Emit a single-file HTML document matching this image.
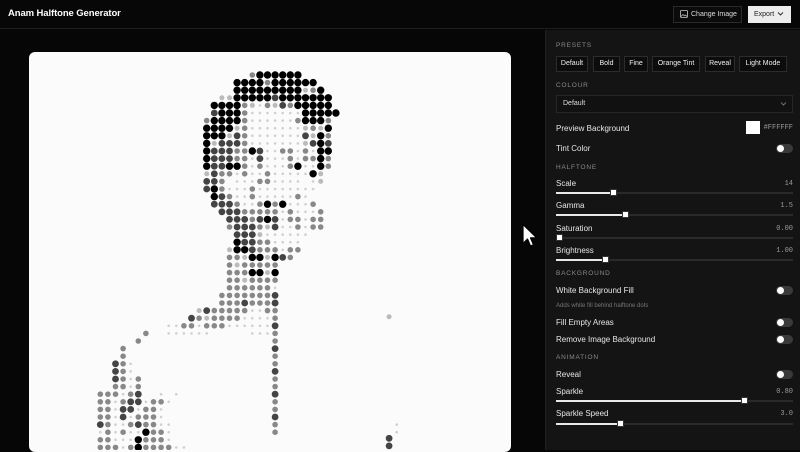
<!DOCTYPE html>
<html><head><meta charset="utf-8"><style>
*{margin:0;padding:0;box-sizing:border-box}
body{width:800px;height:450px;overflow:hidden;background:#060606;font-family:"Liberation Sans",sans-serif;position:relative;color:#ddd}
.a{position:absolute}
.hdr{left:0;top:0;width:800px;height:29px;background:#070707;border-bottom:1px solid #1e1e1e}
.panel{left:545px;top:30px;width:255px;height:420px;background:#141414;border-left:1px solid #1f1f1f}
.sec{font-size:6.5px;letter-spacing:.8px;color:#8a8a8a}
.lbl{font-size:8px;color:#e6e6e6}
.val{font-size:7px;color:#999;font-family:"Liberation Mono",monospace;right:7px}
.btn{top:56px;height:16px;border:1px solid #2c2c2c;background:#0c0c0c;font-size:7px;color:#eee;text-align:center;line-height:14px}
.tog{left:776px;width:17px;height:9px;border-radius:5px;background:#3a3a3a}
.tog::after{content:"";position:absolute;left:1px;top:1px;width:7px;height:7px;border-radius:50%;background:#fff}
.trk{left:556px;width:237px;height:2px;background:#2a2a2a}
.fill{position:absolute;left:0;top:0;height:2px;background:#e8e8e8}
.th{position:absolute;top:-3px;width:7px;height:7px;background:#fff;border:1px solid #333}
</style></head><body>
<div class="a hdr"></div>
<div class="a" style="left:8px;top:8px;font-size:9.5px;font-weight:bold;color:#fff;letter-spacing:-.1px">Anam Halftone Generator</div>
<div class="a" style="left:673px;top:6px;width:69px;height:17px;border:1px solid #2a2a2a;background:#0b0b0b;font-size:7px;color:#ddd;line-height:15px;padding-left:17px">Change Image</div>
<svg class="a" style="left:680px;top:10px" width="8" height="8" viewBox="0 0 8 8"><rect x=".5" y=".5" width="7" height="7" rx="1" fill="none" stroke="#ccc" stroke-width=".8"/><path d="M1 6.5l2-2 1.5 1.5 1-1 1.5 1.5" fill="none" stroke="#ccc" stroke-width=".7"/></svg>
<div class="a" style="left:748px;top:6px;width:43px;height:17px;background:#ececec;font-size:7px;color:#222;line-height:17px;padding-left:6px">Export</div>
<svg class="a" style="left:777px;top:11px" width="7" height="6" viewBox="0 0 7 6"><path d="M1 1.5l2.5 2.5 2.5-2.5" fill="none" stroke="#222" stroke-width=".9"/></svg>

<div class="a" style="left:29px;top:52px;width:482px;height:400px;background:#fbfbfb;border-radius:6px"></div>
<svg id="dots" class="a" style="left:0;top:0" width="545" height="450"></svg>

<svg class="a" style="left:521px;top:223px" width="18" height="25" viewBox="0 0 18 25"><path d="M2 1.5v19l4.5-4.5 3 7 3-1.3-3-6.8h6.3z" fill="#fff" stroke="#000" stroke-width="1.2" stroke-linejoin="round"/></svg>

<div class="a panel"></div>
<div class="a sec" style="left:556px;top:42px">PRESETS</div>
<div class="a btn" style="left:556px;width:32px">Default</div>
<div class="a btn" style="left:593px;width:27px">Bold</div>
<div class="a btn" style="left:624px;width:24px">Fine</div>
<div class="a btn" style="left:652px;width:48px">Orange Tint</div>
<div class="a btn" style="left:705px;width:30px">Reveal</div>
<div class="a btn" style="left:739px;width:48px">Light Mode</div>
<div class="a sec" style="left:556px;top:82px">COLOUR</div>
<div class="a" style="left:556px;top:95px;width:237px;height:18px;border:1px solid #262626;background:#111;font-size:7px;color:#ddd;line-height:16px;padding-left:6px">Default</div>
<svg class="a" style="left:780px;top:101px" width="7" height="6" viewBox="0 0 7 6"><path d="M1 1.5l2.5 2.5 2.5-2.5" fill="none" stroke="#888" stroke-width=".8"/></svg>

<div class="a lbl" style="left:556px;top:124px">Preview Background</div>
<div class="a" style="left:746px;top:121px;width:14px;height:13px;background:#fff"></div>
<div class="a val" style="top:124px">#FFFFFF</div>
<div class="a lbl" style="left:556px;top:144px">Tint Color</div>
<div class="a tog" style="top:144px"></div>
<div class="a sec" style="left:556px;top:164px">HALFTONE</div>
<div class="a lbl" style="left:556px;top:179px">Scale</div><div class="a val" style="top:180px">14</div>
<div class="a trk" style="top:192px"><div class="fill" style="width:57px"></div><div class="th" style="left:54px"></div></div>
<div class="a lbl" style="left:556px;top:201px">Gamma</div><div class="a val" style="top:202px">1.5</div>
<div class="a trk" style="top:214px"><div class="fill" style="width:69px"></div><div class="th" style="left:66px"></div></div>
<div class="a lbl" style="left:556px;top:224px">Saturation</div><div class="a val" style="top:225px">0.00</div>
<div class="a trk" style="top:237px"><div class="th" style="left:0px"></div></div>
<div class="a lbl" style="left:556px;top:246px">Brightness</div><div class="a val" style="top:247px">1.00</div>
<div class="a trk" style="top:259px"><div class="fill" style="width:49px"></div><div class="th" style="left:46px"></div></div>
<div class="a sec" style="left:556px;top:270px">BACKGROUND</div>
<div class="a lbl" style="left:556px;top:286px">White Background Fill</div>
<div class="a tog" style="top:286px"></div>
<div class="a" style="left:556px;top:303px;font-size:6px;color:#777">Adds white fill behind halftone dots</div>
<div class="a lbl" style="left:556px;top:318px">Fill Empty Areas</div>
<div class="a tog" style="top:318px"></div>
<div class="a lbl" style="left:556px;top:335px">Remove Image Background</div>
<div class="a tog" style="top:335px"></div>
<div class="a sec" style="left:556px;top:354px">ANIMATION</div>
<div class="a lbl" style="left:556px;top:370px">Reveal</div>
<div class="a tog" style="top:370px"></div>
<div class="a lbl" style="left:556px;top:387px">Sparkle</div><div class="a val" style="top:388px">0.80</div>
<div class="a trk" style="top:400px"><div class="fill" style="width:188px"></div><div class="th" style="left:185px"></div></div>
<div class="a lbl" style="left:556px;top:409px">Sparkle Speed</div><div class="a val" style="top:410px">3.0</div>
<div class="a trk" style="top:423px"><div class="fill" style="width:64px"></div><div class="th" style="left:61px"></div></div>

<script>
var R=[
"                    GBBBBBB",
"                  BBBBGBBBBBB",
"                  BBBBBBBBBLGB",
"                LLBBBBBDBBBBBBB",
"               BBBBGL.GLDGBBBBB",
"               DBBBG.......BBBBB",
"              GBBBBG......GBBBG",
"              BBBBLG.......LGLB",
"              BBBLDG.......DLBG",
"              BLDDDG.......LDBD",
"              BDDDGGBD..GG.G.BB",
"              BDDDGG.D...G.GGBG",
"              BDDBBG.G...GB..BG",
"              LDGG.G..G.....BL",
"              DDG ...GG.... .L",
"              DBG...G........",
"               BDG..G.....G.",
"               DDDG..GBGB...G",
"                DDDGGGGG.G...G",
"                 DDDGDBD.GG.GG",
"                 GDDDGLD..G.GG",
"                  DDDL......",
"                  BDDGG....",
"                 LBBDGGG.GG",
"                 GGLBBLBDG",
"                 GLGGGGG",
"                 GGGBBLB",
"                 GGLGGGG",
"                 GGGGGG.",
"                GGGGGGGD",
"                GGGDGGGD",
"             LDGGGGG..G",
"            DGLGGGG....",
"         ..GG.GGG......",
"      G  ......     ...",
"     G",
"   G",
"   G",
"  DG.",
"  DG.",
"  DG.G",
"  GG.G",
"GGG.GD  . .",
"GG.GDD.GG.",
"GG.DD.GG.",
"GG.D.GGG.",
"DG..GDGG..",
".G.G..BGG.",
"GG...BGGG.",
"GGG.GBGGGG.."];
var S={B:['#000',3.7],D:['#444',3.4],G:['#888',2.8],L:['#bbb',2.5],'.':['#d0d0d0',1.3]};
var h='';
function c(col,row,ch){var s=S[ch];if(!s)return;h+='<circle cx="'+(100.3+7.6*col).toFixed(1)+'" cy="'+(75+7.6*row).toFixed(1)+'" r="'+s[1]+'" fill="'+s[0]+'"/>';}
R.forEach(function(r,i){for(var j=0;j<r.length;j++)c(j,i,r[j]);});
for(var i=30;i<=47;i++)c(23,i,i%3?'G':'D');
c(38,31.8,'L');c(38,47.8,'D');c(38,48.8,'D');c(39,46,'.');c(39,47,'.');
document.getElementById('dots').innerHTML=h;
</script>
</body></html>
